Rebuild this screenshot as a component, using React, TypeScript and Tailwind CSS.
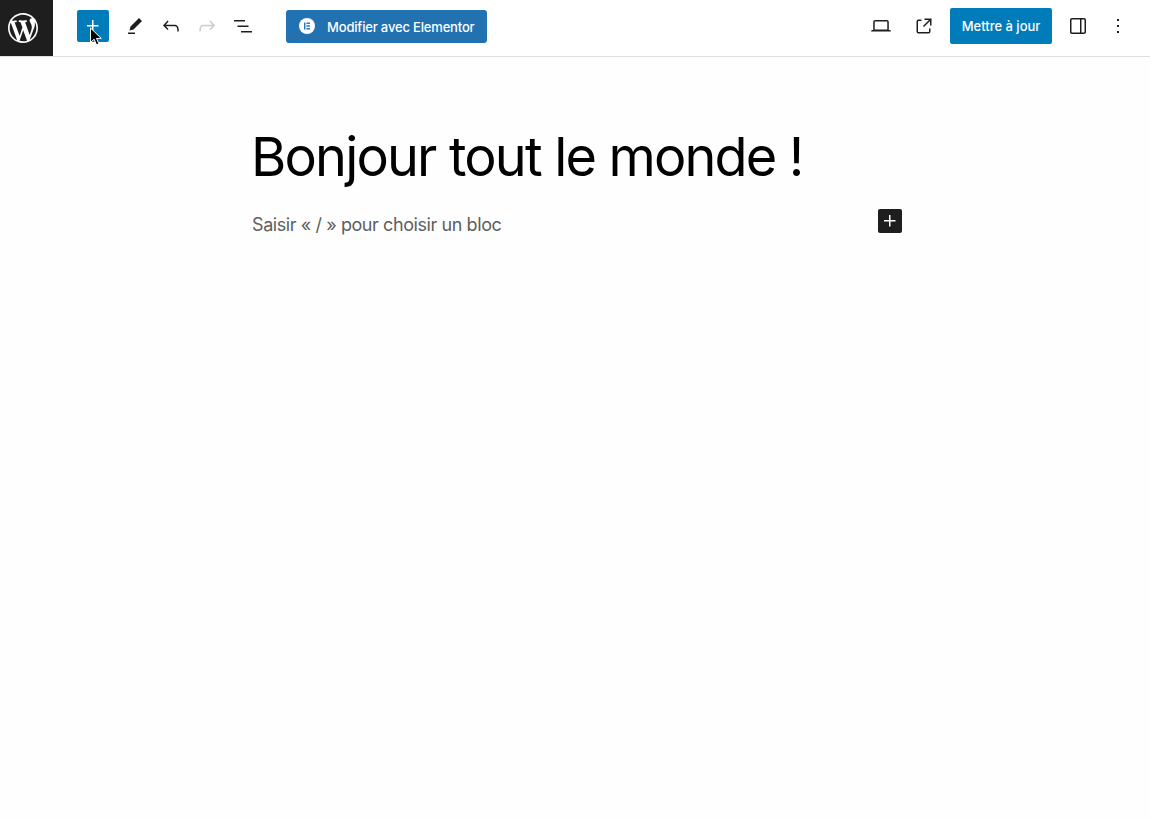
const sans = "font-['Inter','Liberation_Sans',sans-serif]";

function WpIcon({ d, className }: { d: string; className?: string }) {
  return (
    <svg viewBox="0 0 24 24" width="24" height="24" fill="currentColor" className={className}>
      <path d={d} />
    </svg>
  );
}

const PLUS = "M11 12.5V17.5H12.5V12.5H17.5V11H12.5V6H11V11H6V12.5H11Z";

export default function App() {
  return (
    <div className={`${sans} min-h-screen bg-[#fefefe] text-[#1e1e1e]`}>
      {/* Toolbar */}
      <header className="h-[57px] pb-[4px] flex items-center border-b border-[#e0e0e0] bg-white">
        <div className="self-start w-[53px] h-[56px] bg-[#1e1e1e] flex items-center pl-[8px] shrink-0">
          <svg viewBox="0 0 20 20" width="30" height="30" fill="#fff">
            <path d="M20 10c0-5.51-4.49-10-10-10C4.48 0 0 4.49 0 10c0 5.52 4.48 10 10 10 5.51 0 10-4.48 10-10zM7.78 15.37L4.37 6.22c.55-.02 1.17-.08 1.17-.08.5-.06.44-1.13-.06-1.11 0 0-1.45.11-2.37.11-.18 0-.37 0-.58-.01C4.12 2.69 6.87 1.11 10 1.11c2.33 0 4.45.87 6.05 2.34-.68-.11-1.65.39-1.65 1.58 0 .74.45 1.36.9 2.1.35.61.55 1.36.55 2.46 0 1.49-1.4 5-1.4 5l-3.03-8.37c.54-.02.82-.17.82-.17.5-.05.44-1.25-.06-1.22 0 0-1.44.12-2.38.12-.87 0-2.33-.12-2.33-.12-.5-.03-.56 1.2-.06 1.22l.92.08 1.26 3.41zM17.41 10c.24-.64.74-1.87.43-4.25.7 1.29 1.05 2.71 1.05 4.25 0 3.29-1.73 6.24-4.4 7.78.97-2.59 1.94-5.2 2.92-7.78zM6.1 18.09C3.12 16.65 1.11 13.53 1.11 10c0-1.3.23-2.48.72-3.59C3.25 10.3 4.67 14.2 6.1 18.09zm4.03-6.63l2.58 6.98c-.86.29-1.76.45-2.71.45-.79 0-1.57-.11-2.29-.33.81-2.38 1.62-4.74 2.42-7.1z" />
          </svg>
        </div>

        <div className="flex items-center ml-[24px]">
          <button className="relative w-[32px] h-[32px] rounded-[2px] bg-[#007cba] text-white flex items-center justify-center">
            <WpIcon d={PLUS} />
            {/* mouse pointer over the button */}
            <svg viewBox="0 0 14 20" width="14" height="20" className="absolute left-[12px] top-[17px]">
              <path d="M1.5 1v14.5l3.6-3.3 2.4 5.6 2.4-1-2.4-5.4h4.8z" fill="#000" stroke="#fff" strokeWidth="1" />
            </svg>
          </button>
          <WpIcon className="ml-[14px]" d="m19 7-3-3-8.5 8.5-1 4 4-1L19 7Zm-7 11.5H5V20h7v-1.5Z" />
          <WpIcon className="ml-[12px]" d="M18.3 11.7c-.6-.6-1.4-.9-2.3-.9H6.7l2.9-3.3-1.1-1-4.5 5L8.5 16l1-1-2.7-2.7H16c.5 0 .9.2 1.3.5 1 1 1 3.4 1 4.5v.3h1.5v-.2c0-1.5 0-4.3-1.5-5.7z" />
          <WpIcon className="ml-[12px] text-[#cccccc]" d="M15.6 6.5l-1.1 1 2.9 3.3H8c-.9 0-1.7.3-2.3.9-1.4 1.5-1.4 4.2-1.4 5.6v.2h1.5v-.3c0-1.1 0-3.5 1-4.5.3-.3.7-.5 1.3-.5h9.2L14.5 15l1.1 1.1 4.6-4.6-4.6-5z" />
          <WpIcon className="ml-[12px]" d="M3 6h11v1.5H3V6Zm3.5 5.5h11V13h-11v-1.5ZM21 17H10v1.5h11V17Z" />
        </div>

        <button className="ml-[31px] w-[201px] h-[33px] rounded-[3px] bg-[#2271b1] text-white text-[13px] font-medium tracking-[-0.17px] flex items-center pl-[13px]">
          <svg viewBox="0 0 16 16" width="16" height="16" className="mr-[12px]">
            <circle cx="8" cy="8" r="8" fill="#fff" />
            <rect x="5" y="4.5" width="1.4" height="7" fill="#2271b1" />
            <rect x="7.4" y="4.5" width="3.6" height="1.4" fill="#2271b1" />
            <rect x="7.4" y="7.3" width="3.6" height="1.4" fill="#2271b1" />
            <rect x="7.4" y="10.1" width="3.6" height="1.4" fill="#2271b1" />
          </svg>
          <span className="pt-[3px]">Modifier avec Elementor</span>
        </button>

        <div className="ml-auto flex items-center pr-[20px]">
          <WpIcon d="M20.5 16h-.7V8c0-1.1-.9-2-2-2H6.2c-1.1 0-2 .9-2 2v8h-.7c-.8 0-1.5.7-1.5 1.5h20c0-.8-.7-1.5-1.5-1.5zM5.7 8c0-.3.2-.5.5-.5h11.6c.3 0 .5.2.5.5v7.6H5.7V8z" />
          <WpIcon className="ml-[19px]" d="M19.5 4.5h-7V6h4.44l-5.97 5.97 1.06 1.06L18 7.06v4.44h1.5v-7Zm-13 1a2 2 0 0 0-2 2v10a2 2 0 0 0 2 2h10a2 2 0 0 0 2-2v-3H17v3a.5.5 0 0 1-.5.5h-10a.5.5 0 0 1-.5-.5v-10a.5.5 0 0 1 .5-.5h3V5.5h-3Z" />
          <button className="ml-[14px] w-[102px] h-[36px] pt-[2px] rounded-[2px] bg-[#007cba] text-white text-[13px] font-medium">
            Mettre à jour
          </button>
          <WpIcon className="ml-[14px]" d="M18 4H6c-1.1 0-2 .9-2 2v12c0 1.1.9 2 2 2h12c1.1 0 2-.9 2-2V6c0-1.1-.9-2-2-2zm-4 14.5H6c-.3 0-.5-.2-.5-.5V6c0-.3.2-.5.5-.5h8v13zm4.5-.5c0 .3-.2.5-.5.5h-2.5v-13H18c.3 0 .5.2.5.5v12z" />
          <WpIcon className="ml-[16px]" d="M13 19h-2v-2h2v2zm0-6h-2v-2h2v2zm0-6h-2V5h2v2z" />
        </div>
      </header>

      {/* Editor canvas */}
      <main className="ml-[252px] w-[650px] pt-[68px]">
        <h1 className="-ml-px text-[54px] leading-[64px] font-normal text-black tracking-[-1.82px] whitespace-nowrap">
          Bonjour tout le monde !
        </h1>
        <div className="mt-[20px] flex items-start justify-between">
          <p className="mt-[2px] text-[18px] leading-[28px] tracking-[-0.42px] text-[#5e5e5e]">Saisir « / » pour choisir un bloc</p>
          <button className="w-[24px] h-[24px] rounded-[2px] bg-[#1e1e1e] text-white flex items-center justify-center">
            <WpIcon d={PLUS} />
          </button>
        </div>
      </main>
    </div>
  );
}
